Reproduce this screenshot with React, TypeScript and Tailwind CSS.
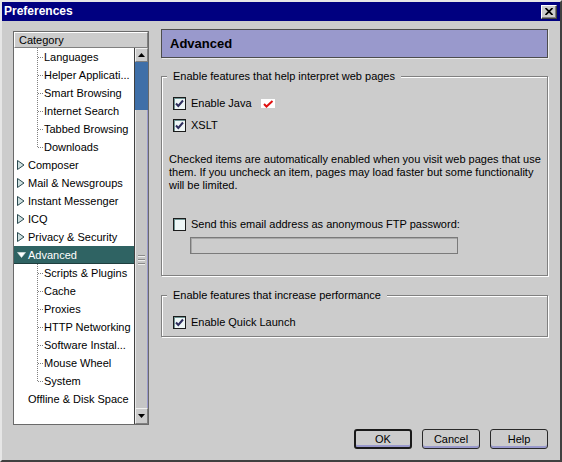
import React from "react";

type Row = {
  label: string;
  kind: "child" | "parent" | "open" | "leaf";
  last?: boolean;
  selected?: boolean;
};

const rows: Row[] = [
  { label: "Languages", kind: "child" },
  { label: "Helper Applicati...", kind: "child" },
  { label: "Smart Browsing", kind: "child" },
  { label: "Internet Search", kind: "child" },
  { label: "Tabbed Browsing", kind: "child" },
  { label: "Downloads", kind: "child", last: true },
  { label: "Composer", kind: "parent" },
  { label: "Mail & Newsgroups", kind: "parent" },
  { label: "Instant Messenger", kind: "parent" },
  { label: "ICQ", kind: "parent" },
  { label: "Privacy & Security", kind: "parent" },
  { label: "Advanced", kind: "open", selected: true },
  { label: "Scripts & Plugins", kind: "child" },
  { label: "Cache", kind: "child" },
  { label: "Proxies", kind: "child" },
  { label: "HTTP Networking", kind: "child" },
  { label: "Software Instal...", kind: "child" },
  { label: "Mouse Wheel", kind: "child" },
  { label: "System", kind: "child", last: true },
  { label: "Offline & Disk Space", kind: "leaf" },
];

function TreeRow({ row }: { row: Row }) {
  const base = "flex h-[18px] items-center leading-[18px] whitespace-nowrap";
  if (row.kind === "child") {
    return (
      <div className={base}>
        <svg className="ml-[23px] shrink-0" width="7" height="18" viewBox="0 0 7 18">
          <line x1="0.5" y1="0" x2="0.5" y2={row.last ? 9 : 18} stroke="#808080" strokeDasharray="1 1" />
          <line x1="1" y1="9.5" x2="7" y2="9.5" stroke="#808080" strokeDasharray="1 1" />
        </svg>
        <span>{row.label}</span>
      </div>
    );
  }
  if (row.kind === "parent") {
    return (
      <div className={base}>
        <svg className="ml-[3px] shrink-0" width="8" height="10" viewBox="0 0 8 10">
          <polygon points="0.5,0.5 7,5 0.5,9.5" fill="#cfe0e0" stroke="#2a4a50" strokeWidth="1" />
        </svg>
        <span className="ml-[3px]">{row.label}</span>
      </div>
    );
  }
  if (row.kind === "open") {
    return (
      <div className={`${base} bg-[#2f6363] text-white border-b border-b-[#1e3e3e]`}>
        <svg className="ml-[3px] shrink-0" width="9" height="6" viewBox="0 0 9 6">
          <polygon points="0.5,0.5 8.5,0.5 4.5,5.5" fill="#ffffff" stroke="#e0e8e8" strokeWidth="0.6" />
        </svg>
        <span className="ml-[2px]">{row.label}</span>
      </div>
    );
  }
  return (
    <div className={base}>
      <span className="ml-[14px]">{row.label}</span>
    </div>
  );
}

function CheckMark() {
  return (
    <svg width="11" height="11" viewBox="0 0 11 11">
      <path d="M2 5.5 L4.3 8 L9 2.5" fill="none" stroke="#2e2e5e" strokeWidth="2" />
    </svg>
  );
}

function Checkbox({ checked }: { checked: boolean }) {
  return (
    <div className="w-[13px] h-[13px] shrink-0 border border-[#1c1c1c] bg-[#eef6f6] shadow-[inset_1px_1px_0_#6f9494] flex items-center justify-center">
      {checked && <CheckMark />}
    </div>
  );
}

function CheckRow({
  checked,
  label,
  className = "",
  extra,
}: {
  checked: boolean;
  label: string;
  className?: string;
  extra?: React.ReactNode;
}) {
  return (
    <div className={`flex items-center h-[13px] ml-[4px] ${className}`}>
      <Checkbox checked={checked} />
      <span className="ml-[5px] leading-[13px] whitespace-nowrap">{label}</span>
      {extra}
    </div>
  );
}

function Btn({ label, def }: { label: string; def?: boolean }) {
  return (
    <div
      className={`w-[58px] h-[20px] rounded-[3px] bg-[#cccccc] flex items-center justify-center shadow-[inset_0_-2px_0_#9999cc] ${
        def ? "border-2 border-[#1a1a1a]" : "border border-[#2a2a2a]"
      }`}
    >
      <span className="leading-[14px]">{label}</span>
    </div>
  );
}

export default function App() {
  return (
    <div className="w-[562px] h-[462px] bg-[#cccccc] font-['Liberation_Sans',Arial,sans-serif] text-[11px] text-black">
      <div className="w-full h-full flex flex-col border-2 border-t-[#e6e6e6] border-l-[#e6e6e6] border-r-[#404040] border-b-[#404040]">
        {/* Title bar */}
        <div className="h-[19px] shrink-0 bg-[#000080] flex items-center justify-between pl-[2px] pr-[3px]">
          <span className="text-white font-bold text-[12px] leading-[19px]">Preferences</span>
          <div className="w-[16px] h-[14px] bg-[#cccccc] border border-t-white border-l-white border-r-[#404040] border-b-[#404040] shadow-[inset_-1px_-1px_0_#808080] flex items-center justify-center">
            <svg width="8" height="7" viewBox="0 0 8 7">
              <path d="M0.5 0 L7.5 7 M7.5 0 L0.5 7" stroke="#000" strokeWidth="1.7" />
            </svg>
          </div>
        </div>

        {/* Body */}
        <div className="flex pt-[8px] pl-[11px]">
          {/* Category tree */}
          <div className="mt-[2px] w-[136px] h-[394px] shrink-0 border border-[#6a6a6a] flex flex-col">
            <div className="h-[16px] shrink-0 bg-[#cccccc] border border-t-white border-l-white border-r-[#808080] border-b-[#808080] flex items-center pl-[4px] leading-[14px]">
              Category
            </div>
            <div className="flex flex-1 min-h-0">
              <div className="w-[120px] bg-white overflow-hidden">
                {rows.map((r, i) => (
                  <TreeRow key={i} row={r} />
                ))}
              </div>
              <div className="w-[14px] flex flex-col border-l border-[#404040]">
                <div className="h-[14px] shrink-0 bg-[#cccccc] border border-t-[#f0f0f0] border-l-[#f0f0f0] border-r-[#808080] border-b-[#808080] flex items-center justify-center">
                  <svg width="7" height="4" viewBox="0 0 7 4">
                    <polygon points="3.5,0 7,4 0,4" fill="#000" />
                  </svg>
                </div>
                <div className="h-[48px] shrink-0 bg-[#3f6fa8]" />
                <div className="flex-1 bg-[#c6c6c6] border-l border-l-[#e8e8e8] border-r border-r-[#9999cc] flex flex-col items-center justify-center gap-[3px]">
                  <div className="w-[7px] h-px bg-[#8a8a8a] shadow-[0_1px_0_#eeeeee]" />
                  <div className="w-[7px] h-px bg-[#8a8a8a] shadow-[0_1px_0_#eeeeee]" />
                  <div className="w-[7px] h-px bg-[#8a8a8a] shadow-[0_1px_0_#eeeeee]" />
                </div>
                <div className="h-[16px] shrink-0 bg-[#cccccc] border border-t-[#f0f0f0] border-l-[#f0f0f0] border-r-[#808080] border-b-[#808080] flex items-center justify-center">
                  <svg width="7" height="4" viewBox="0 0 7 4">
                    <polygon points="0,0 7,0 3.5,4" fill="#000" />
                  </svg>
                </div>
              </div>
            </div>
          </div>

          {/* Right column */}
          <div className="ml-[12px] w-[387px] h-[420px] flex flex-col">
            <div className="h-[29px] shrink-0 bg-[#9999cc] border border-[#4d4d4d] shadow-[1px_1px_0_#ececec] flex items-center pl-[8px]">
              <span className="font-bold text-[13px] leading-[16px]">Advanced</span>
            </div>

            {/* Group 1 */}
            <div className="relative mt-[18px] border border-[#808080] shadow-[inset_1px_1px_0_#fff,1px_1px_0_#fff] px-[7px] pt-[20px] pb-[21px]">
              <span className="absolute -top-[7px] left-[5px] bg-[#cccccc] px-[6px] leading-[13px] whitespace-nowrap">
                Enable features that help interpret web pages
              </span>
              <CheckRow
                checked
                label="Enable Java"
                extra={
                  <span className="ml-[9px] w-[14px] h-[9px] bg-white flex items-center justify-center">
                    <svg width="12" height="8" viewBox="0 0 12 8">
                      <path d="M2 4 L4.5 6.5 L10.5 1" fill="none" stroke="#e01010" strokeWidth="2" />
                    </svg>
                  </span>
                }
              />
              <CheckRow checked label="XSLT" className="mt-[9px]" />
              <p className="mt-[21px] leading-[13px] whitespace-nowrap">
                Checked items are automatically enabled when you visit web pages that use
                <br />
                them. If you uncheck an item, pages may load faster but some functionality
                <br />
                will be limited.
              </p>
              <CheckRow checked={false} label="Send this email address as anonymous FTP password:" className="mt-[26px]" />
              <div className="mt-[6px] ml-[21px] w-[268px] h-[17px] bg-[#cccccc] border border-[#7a7a7a] shadow-[inset_1px_1px_0_#a8a8a8]" />
            </div>

            {/* Group 2 */}
            <div className="relative mt-[19px] border border-[#808080] shadow-[inset_1px_1px_0_#fff,1px_1px_0_#fff] px-[7px] pt-[20px] pb-[7px]">
              <span className="absolute -top-[7px] left-[5px] bg-[#cccccc] px-[6px] leading-[13px] whitespace-nowrap">
                Enable features that increase performance
              </span>
              <CheckRow checked label="Enable Quick Launch" />
            </div>

            <div className="mt-auto flex justify-end gap-[10px]">
              <Btn label="OK" def />
              <Btn label="Cancel" />
              <Btn label="Help" />
            </div>
          </div>
        </div>
      </div>
    </div>
  );
}
